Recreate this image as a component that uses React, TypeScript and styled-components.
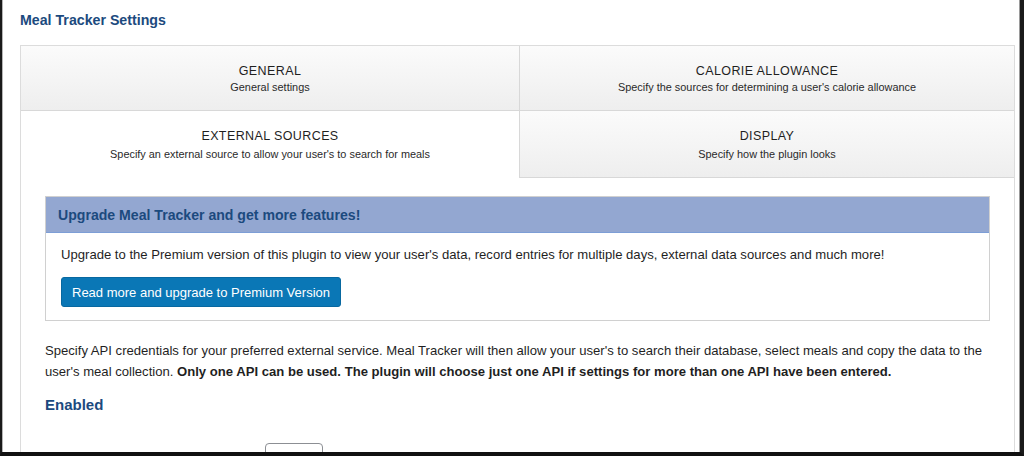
import React from "react";
import styled, { createGlobalStyle } from "styled-components";

const GlobalStyle = createGlobalStyle`
  html, body { margin: 0; padding: 0; background: #ffffff; }
  body { font-family: "Liberation Sans", Arial, Helvetica, sans-serif; }
  * { box-sizing: border-box; }
`;

const Frame = styled.div`
  width: 1024px;
  height: 456px;
  overflow: hidden;
  background: #ffffff;
  border-left: 2px solid #1a1a1a;
  border-right: 4px solid #1a1a1a;
  border-bottom: 4px solid #111111;
  display: flex;
  flex-direction: column;
`;

const Inner = styled.div`
  flex: 1;
  border-left: 1px solid #b5b5b5;
  border-right: 1px solid #9a9a9a;
  display: flex;
  flex-direction: column;
  padding-left: 17px;
  padding-right: 1px;
  min-height: 0;
`;

const Title = styled.h1`
  margin: 0;
  padding: 12px 0 0;
  height: 45px;
  font-size: 14.2px;
  font-weight: bold;
  color: #1c4a7e;
  line-height: 17px;
`;

const Panel = styled.div`
  flex: 1;
  border: 1px solid #dcdcdc;
  border-bottom: none;
  margin-right: 3px;
  min-height: 0;
`;

const TabGrid = styled.div`
  display: grid;
  grid-template-columns: 498px 1fr;
`;

const Tab = styled.div<{ $active?: boolean; $right?: boolean; $h: number }>`
  height: ${(p) => p.$h}px;
  text-align: center;
  padding-top: 17px;
  background: ${(p) =>
    p.$active ? "#ffffff" : "linear-gradient(#fbfbfb, #eeeeee)"};
  border-bottom: 1px solid ${(p) => (p.$active ? "transparent" : "#d8d8d8")};
  border-left: ${(p) => (p.$right ? "1px solid #d8d8d8" : "none")};
  color: #222;
`;

const TabTitle = styled.div`
  font-size: 12.5px;
  letter-spacing: 0.4px;
  line-height: 16px;
  color: #1f1f1f;
`;

const TabSub = styled.div<{ $gap: number }>`
  font-size: 10.9px;
  line-height: 14px;
  margin-top: ${(p) => p.$gap}px;
  color: #2a2a2a;
`;

const Content = styled.div`
  padding: 18px 24px 0 24px;
`;

const Notice = styled.div`
  border: 1px solid #d0d0d0;
`;

const NoticeHead = styled.div`
  background: #93a7d1;
  border-bottom: 1px solid #7d9ed6;
  height: 36px;
  padding: 0 12px;
  display: flex;
  align-items: center;
  font-size: 14.1px;
  font-weight: bold;
  color: #1c4a7e;
`;

const NoticeBody = styled.div`
  padding: 13px 15px 13px;
  font-size: 13.1px;
  color: #1f1f1f;
  line-height: 17px;
`;

const UpgradeButton = styled.button`
  margin-top: 14px;
  width: 280px;
  height: 30px;
  background: #0a77b6;
  border: 1px solid #0868a0;
  border-radius: 3px;
  color: #ffffff;
  font-family: inherit;
  font-size: 13px;
  padding: 0;
  cursor: pointer;
`;

const Para = styled.p`
  margin: 19px 0 0;
  font-size: 13.1px;
  line-height: 21px;
  color: #1f1f1f;
`;

const Heading = styled.h2`
  margin: 13px 0 0;
  font-size: 15px;
  font-weight: bold;
  color: #1c4a7e;
  line-height: 20px;
`;

const FieldRow = styled.div`
  margin-top: 28px;
  display: flex;
  align-items: flex-start;
`;

const FieldLabel = styled.div`
  width: 220px;
  font-size: 13.1px;
  color: #b0b0b0;
  padding-top: 10px;
`;

const SelectBox = styled.div`
  width: 58px;
  height: 30px;
  border: 1px solid #8c8f94;
  border-radius: 4px;
  font-size: 13px;
  color: #888;
  padding: 8px 10px 0;
`;

const tabs = [
  { title: "GENERAL", sub: "General settings" },
  {
    title: "CALORIE ALLOWANCE",
    sub: "Specify the sources for determining a user's calorie allowance",
  },
  {
    title: "EXTERNAL SOURCES",
    sub: "Specify an external source to allow your user's to search for meals",
    active: true,
  },
  { title: "DISPLAY", sub: "Specify how the plugin looks" },
];

export default function App() {
  return (
    <>
      <GlobalStyle />
      <Frame>
        <Inner>
          <Title>Meal Tracker Settings</Title>
          <Panel>
            <TabGrid>
              {tabs.map((t, i) => (
                <Tab
                  key={t.title}
                  $active={t.active}
                  $right={i % 2 === 1}
                  $h={i < 2 ? 65 : 67}
                >
                  <TabTitle>{t.title}</TabTitle>
                  <TabSub $gap={i < 2 ? 1 : 3}>{t.sub}</TabSub>
                </Tab>
              ))}
            </TabGrid>
            <Content>
              <Notice>
                <NoticeHead>Upgrade Meal Tracker and get more features!</NoticeHead>
                <NoticeBody>
                  Upgrade to the Premium version of this plugin to view your
                  user's data, record entries for multiple days, external data
                  sources and much more!
                  <div>
                    <UpgradeButton>Read more and upgrade to Premium Version</UpgradeButton>
                  </div>
                </NoticeBody>
              </Notice>
              <Para>
                Specify API credentials for your preferred external service.
                Meal Tracker will then allow your user's to search their
                database, select meals and copy the data to the user's meal
                collection.{" "}
                <b>
                  Only one API can be used. The plugin will choose just one API
                  if settings for more than one API have been entered.
                </b>
              </Para>
              <Heading>Enabled</Heading>
              <FieldRow>
                <FieldLabel>Enter where you would like?</FieldLabel>
                <SelectBox>No</SelectBox>
              </FieldRow>
            </Content>
          </Panel>
        </Inner>
      </Frame>
    </>
  );
}
